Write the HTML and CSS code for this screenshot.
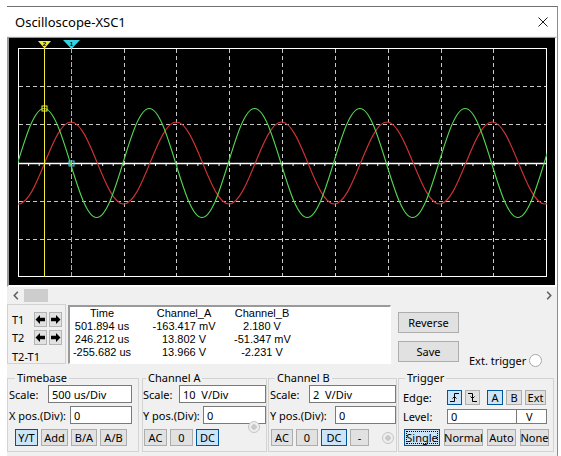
FILE: index.html
```html
<!DOCTYPE html>
<html lang="en">
<head>
<meta charset="utf-8">
<title>Oscilloscope-XSC1</title>
<link rel="stylesheet" href="styles.css">
</head>
<body>
<div class="window">
  <div class="titlebar">
    <span class="title">Oscilloscope-XSC1</span>
    <svg class="close" width="10" height="10" viewBox="0 0 10 10"><path d="M0.5 0.5L9.5 9.5M9.5 0.5L0.5 9.5" stroke="#1a1a1a" stroke-width="1"/></svg>
  </div>
  <div class="client">
    <div class="scope">
      <svg class="screen" width="546" height="247" viewBox="9 38 546 247">
        <defs><clipPath id="plot"><rect x="18" y="48" width="529" height="229"/></clipPath></defs>
        <path fill="none" stroke="#c8c8c8" stroke-width="1" stroke-dasharray="4 3" d="M71.5 49V277M124.5 49V277M176.5 49V277M229.5 49V277M282.5 49V277M335.5 49V277M388.5 49V277M441.5 49V277M493.5 49V277M19 86.5H547M19 124.5H547M19 201.5H547M19 239.5H547"/>
        <rect x="18.5" y="48.5" width="528" height="228" fill="none" stroke="#ffffff"/>
        <path d="M18 163.5H547" stroke="#ffffff" stroke-width="1.4"/>
        <path d="M28.1 165H540" stroke="#ffffff" stroke-width="2" stroke-dasharray="1 9.58"/>
        <g clip-path="url(#plot)" fill="none" stroke-width="1.1">
          <path stroke="#d03434" d="M-34.3 122c9.527 0 17.74 20 26.325 41c8.585 21 16.798 41 26.325 41c9.527 0 17.74 -20 26.325 -41c8.585 -21 16.798 -41 26.325 -41c9.527 0 17.74 20 26.325 41c8.585 21 16.798 41 26.325 41c9.527 0 17.74 -20 26.325 -41c8.585 -21 16.798 -41 26.325 -41c9.527 0 17.74 20 26.325 41c8.585 21 16.798 41 26.325 41c9.527 0 17.74 -20 26.325 -41c8.585 -21 16.798 -41 26.325 -41c9.527 0 17.74 20 26.325 41c8.585 21 16.798 41 26.325 41c9.527 0 17.74 -20 26.325 -41c8.585 -21 16.798 -41 26.325 -41c9.527 0 17.74 20 26.325 41c8.585 21 16.798 41 26.325 41c9.527 0 17.74 -20 26.325 -41c8.585 -21 16.798 -41 26.325 -41c9.527 0 17.74 20 26.325 41c8.585 21 16.798 41 26.325 41c9.527 0 17.74 -20 26.325 -41c8.585 -21 16.798 -41 26.325 -41"/>
          <path stroke="#52d852" d="M-61.3 108.5c9.527 0 17.74 26.58 26.325 54.5c8.585 27.92 16.798 54.5 26.325 54.5c9.527 0 17.74 -26.58 26.325 -54.5c8.585 -27.92 16.798 -54.5 26.325 -54.5c9.527 0 17.74 26.58 26.325 54.5c8.585 27.92 16.798 54.5 26.325 54.5c9.527 0 17.74 -26.58 26.325 -54.5c8.585 -27.92 16.798 -54.5 26.325 -54.5c9.527 0 17.74 26.58 26.325 54.5c8.585 27.92 16.798 54.5 26.325 54.5c9.527 0 17.74 -26.58 26.325 -54.5c8.585 -27.92 16.798 -54.5 26.325 -54.5c9.527 0 17.74 26.58 26.325 54.5c8.585 27.92 16.798 54.5 26.325 54.5c9.527 0 17.74 -26.58 26.325 -54.5c8.585 -27.92 16.798 -54.5 26.325 -54.5c9.527 0 17.74 26.58 26.325 54.5c8.585 27.92 16.798 54.5 26.325 54.5c9.527 0 17.74 -26.58 26.325 -54.5c8.585 -27.92 16.798 -54.5 26.325 -54.5c9.527 0 17.74 26.58 26.325 54.5c8.585 27.92 16.798 54.5 26.325 54.5c9.527 0 17.74 -26.58 26.325 -54.5c8.585 -27.92 16.798 -54.5 26.325 -54.5"/>
        </g>
        <line x1="44.5" y1="41" x2="44.5" y2="277" stroke="#f3ee3a" stroke-width="1"/>
        <line x1="71.5" y1="48" x2="71.5" y2="277" stroke="#45d6e2" stroke-width="1" stroke-dasharray="4 3"/>
        <rect x="42" y="106" width="5" height="5" fill="none" stroke="#f3ee3a"/>
        <rect x="69" y="161" width="5" height="5" fill="none" stroke="#45d6e2"/>
        <polygon points="38,41 51,41 44.5,48.5" fill="#f3ee3a"/>
        <text class="mk" x="44.5" y="46">2</text>
        <polygon points="63,40 80,40 71.5,49" fill="#30d4e4"/>
        <text class="mk" x="71.5" y="46">1</text>
      </svg>
    </div>
    <div class="hscroll">
      <div class="sb-btn"><svg width="6" height="9" viewBox="0 0 6 9"><path d="M4.8 0.8L1.3 4.5L4.8 8.2" fill="none" stroke="#606060" stroke-width="1.6"/></svg></div>
      <div class="sb-thumb"></div>
      <div class="sb-btn sb-right"><svg width="6" height="9" viewBox="0 0 6 9"><path d="M1.2 0.8L4.7 4.5L1.2 8.2" fill="none" stroke="#606060" stroke-width="1.6"/></svg></div>
    </div>
    <div class="midrow">
      <div class="cursors">
        <div class="crow">
          <span class="clabel">T1</span>
          <button class="abtn"><svg width="11" height="13" viewBox="0 0 11 13"><polygon points="0.5,6.5 5,2 5,4.8 10,4.8 10,8.2 5,8.2 5,11" fill="#000"/></svg></button>
          <button class="abtn"><svg width="11" height="13" viewBox="0 0 11 13"><polygon points="10.5,6.5 6,2 6,4.8 1,4.8 1,8.2 6,8.2 6,11" fill="#000"/></svg></button>
        </div>
        <div class="crow">
          <span class="clabel">T2</span>
          <button class="abtn"><svg width="11" height="13" viewBox="0 0 11 13"><polygon points="0.5,6.5 5,2 5,4.8 10,4.8 10,8.2 5,8.2 5,11" fill="#000"/></svg></button>
          <button class="abtn"><svg width="11" height="13" viewBox="0 0 11 13"><polygon points="10.5,6.5 6,2 6,4.8 1,4.8 1,8.2 6,8.2 6,11" fill="#000"/></svg></button>
        </div>
        <div class="crow crow-diff"><span class="clabel-diff">T2-T1</span></div>
      </div>
      <div class="readout">
        <span>Time</span><span>Channel_A</span><span>Channel_B</span>
        <span>501.894 us</span><span>-163.417 mV</span><span>2.180 V</span>
        <span>246.212 us</span><span>13.802 V</span><span>-51.347 mV</span>
        <span>-255.682 us</span><span>13.966 V</span><span>-2.231 V</span>
      </div>
      <div class="actions">
        <button class="btn btn-wide">Reverse</button>
        <button class="btn btn-wide">Save</button>
      </div>
      <div class="ext">Ext. trigger<span class="radio"></span></div>
    </div>
    <div class="controls">
      <fieldset class="grp grp-time">
        <legend class="lg-time">Timebase</legend>
        <div class="row"><span>Scale:</span><input class="field w84" type="text" value="500 us/Div" readonly></div>
        <div class="row"><span>X pos.(Div):</span><input class="field w62" type="text" value="0" readonly></div>
        <div class="btnrow pad-time">
          <button class="btn on w23">Y/T</button>
          <button class="btn w27">Add</button>
          <button class="btn w26">B/A</button>
          <button class="btn w27">A/B</button>
        </div>
      </fieldset>
      <fieldset class="grp grp-a">
        <legend class="lg-a">Channel A</legend>
        <div class="row"><span>Scale:</span><input class="field w87" type="text" value="10  V/Div" readonly></div>
        <div class="row"><span>Y pos.(Div):</span><input class="field w63" type="text" value="0" readonly></div>
        <div class="btnrow pad-a">
          <button class="btn w23">AC</button>
          <button class="btn w23">0</button>
          <button class="btn on w23">DC</button>
          <span class="radio radio-off radio-a"></span>
        </div>
      </fieldset>
      <fieldset class="grp grp-b">
        <legend class="lg-b">Channel B</legend>
        <div class="row"><span>Scale:</span><input class="field w87" type="text" value="2  V/Div" readonly></div>
        <div class="row"><span>Y pos.(Div):</span><input class="field w61" type="text" value="0" readonly></div>
        <div class="btnrow pad-b">
          <button class="btn w22">AC</button>
          <button class="btn w22">0</button>
          <button class="btn on w26">DC</button>
          <button class="btn w19">-</button>
          <span class="radio radio-off radio-b"></span>
        </div>
      </fieldset>
      <fieldset class="grp grp-trig">
        <legend class="lg-trig">Trigger</legend>
        <div class="trow">
          <span class="tlabel">Edge:</span>
          <button class="btn on ebtn"><svg width="13" height="13" viewBox="0 0 13 13"><path d="M2 10.5H6.5V2.5H11M4.5 7.5L6.5 5.5L8.5 7.5" fill="none" stroke="#000" stroke-width="1"/></svg></button>
          <button class="btn ebtn"><svg width="13" height="13" viewBox="0 0 13 13"><path d="M2 2.5H6.5V10.5H11M4.5 5.5L6.5 7.5L8.5 5.5" fill="none" stroke="#000" stroke-width="1"/></svg></button>
          <button class="btn on w16 src-first">A</button>
          <button class="btn w16">B</button>
          <button class="btn w21">Ext</button>
        </div>
        <div class="trow trow-level">
          <span class="tlabel">Level:</span>
          <input class="field lvl" type="text" value="0" readonly>
          <span class="unit">V</span>
        </div>
        <div class="btnrow pad-trig">
          <button class="btn on focus w36">Single</button>
          <button class="btn w39">Normal</button>
          <button class="btn w29">Auto</button>
          <button class="btn w29">None</button>
        </div>
      </fieldset>
    </div>
  </div>
</div>
</body>
</html>
```

FILE: styles.css
```css
* { box-sizing: border-box; }
html, body { margin: 0; background: #ffffff; }
body {
  font-family: "Noto Sans", "Liberation Sans", sans-serif;
  font-size: 11px;
  line-height: 13px;
  color: #000;
}
.window {
  margin: 6px 0 0 7px;
  width: 551px;
  height: 450px;
  border-top: 1px solid #707070;
  border-right: 1px solid #8c8c8c;
  background: #f0f0f0;
  overflow: hidden;
}
.titlebar {
  height: 29px;
  background: #ffffff;
  display: flex;
  align-items: center;
  justify-content: space-between;
  padding: 0 9px 0 8px;
}
.title { font-size: 13px; line-height: 16px; }
.close { display: block; }
.client { padding-top: 1px; }

.scope {
  width: 550px;
  height: 250px;
  border-style: solid;
  border-width: 1px 2px 2px 2px;
  border-color: #9a9a9a #ffffff #ffffff #9a9a9a;
  background: #000;
}
.screen { display: block; }
.mk {
  font-family: "Liberation Sans", sans-serif;
  font-size: 6px;
  font-weight: bold;
  text-anchor: middle;
  fill: #000;
}

.hscroll { height: 17px; display: flex; align-items: center; }
.sb-btn { width: 17px; height: 17px; display: flex; align-items: center; justify-content: center; }
.sb-btn svg { display: block; }
.sb-thumb { width: 24px; height: 13px; background: #cdcdcd; }
.sb-right { margin-left: auto; }

.midrow { display: flex; align-items: flex-start; height: 67px; }
.cursors {
  width: 59px;
  height: 60px;
  border: 1px solid #d2d2d2;
  padding: 7px 0 0 4px;
}
.crow { display: flex; align-items: center; height: 15px; }
.crow + .crow { margin-top: 3px; }
.crow.crow-diff { margin-top: 5px; height: 13px; }
.clabel { width: 22px; }
.clabel-diff { white-space: nowrap; }
.abtn {
  width: 13px;
  height: 15px;
  margin: 0 2px 0 0;
  padding: 0;
  border: 1px solid #b4b4b4;
  background: #e1e1e1;
  display: flex;
  align-items: center;
  justify-content: center;
}
.abtn svg { display: block; }

.readout {
  margin: 1px 0 0 2px;
  width: 323px;
  height: 59px;
  background: #fff;
  border-style: solid;
  border-width: 2px 1px 1px 2px;
  border-color: #9a9a9a #ffffff #ffffff #9a9a9a;
  display: grid;
  grid-template-columns: 64px 100px 56px;
  grid-auto-rows: 13px;
  align-content: start;
  text-align: center;
  white-space: nowrap;
  font-family: "Liberation Sans", "Noto Sans", sans-serif;
  font-size: 11px;
  line-height: 13px;
}

.actions {
  margin-left: 7px;
  width: 61px;
  padding-top: 8px;
  display: flex;
  flex-direction: column;
  gap: 8px;
}
.btn {
  display: flex;
  align-items: center;
  justify-content: center;
  font: inherit;
  margin: 0;
  padding: 0;
  background: #e1e1e1;
  border: 1px solid #adadad;
  color: #000;
  white-space: nowrap;
}
.btn.on { background: #cce4f7; border-color: #005499; }
.btn.focus { outline: 1px dotted #000; outline-offset: -3px; }
.btn-wide { width: 61px; height: 21px; }

.ext {
  margin: 49px 0 0 10px;
  display: flex;
  align-items: center;
  gap: 3px;
  height: 15px;
  white-space: nowrap;
}
.radio {
  display: inline-block;
  flex: none;
  width: 13px;
  height: 13px;
  border-radius: 50%;
  border: 1px solid #a8a8a8;
  background: #fff;
}
.radio-off {
  width: 12px;
  height: 12px;
  border-color: #c4c4c4;
  background: radial-gradient(circle, #c9c9c9 0 2.5px, #eeeeee 3px);
}
.radio-a { align-self: flex-start; margin: -8px 0 0 26px; }
.radio-b { margin-left: 10px; }

.controls { display: flex; align-items: flex-start; }
.grp {
  margin: 0;
  padding: 0 0 5px 0;
  border: 1px solid #d3d3d3;
  min-width: 0;
}
legend { padding: 0 2px; line-height: 14px; }
.grp-time { width: 132px; padding-right: 6px; }
.grp-a { width: 125px; margin-left: 3px; }
.grp-b { width: 129px; margin-left: 1px; }
.grp-trig { width: 156px; margin-left: 1px; }
.lg-time { margin-left: 7px; }
.lg-a { margin-left: 3px; }
.lg-b { margin-left: 6px; }
.lg-trig { margin-left: 6px; }

.row { display: flex; align-items: center; height: 18px; white-space: nowrap; }
.row + .row { margin-top: 3px; }
.grp-time .row { padding-left: 1px; }
.grp-b .row { padding-left: 1px; }
.field {
  height: 18px;
  margin: 0 0 0 auto;
  border: 1px solid #7a7a7a;
  background: #fff;
  font: inherit;
  color: #000;
  padding: 0 0 0 3px;
  outline: none;
}
.w84 { width: 84px; }
.w62 { width: 62px; }
.w87 { width: 87px; }
.w63 { width: 63px; }
.w61 { width: 61px; }

.btnrow { display: flex; align-items: center; gap: 3px; height: 17px; margin-top: 5px; }
.btnrow .btn { height: 17px; }
.pad-time { padding-left: 7px; }
.pad-a { padding-left: 1px; }
.pad-b { padding-left: 2px; }
.pad-trig { padding-left: 5px; gap: 4px; }
.w16 { width: 16px; }
.w19 { width: 19px; }
.w21 { width: 21px; }
.w22 { width: 22px; }
.w23 { width: 23px; }
.w26 { width: 26px; }
.w27 { width: 27px; }
.w29 { width: 29px; }
.w36 { width: 36px; }
.w39 { width: 39px; }

.grp-trig .trow { padding-left: 4px; }
.trow { display: flex; align-items: center; height: 15px; margin-top: 5px; gap: 3px; }
.trow.trow-level { margin-top: 4px; gap: 0; }
.tlabel { width: 41px; }
.trow-level .tlabel { width: 44px; }
.ebtn { width: 15px; height: 15px; }
.trow .btn { height: 15px; }
.src-first { margin-left: 4px; }
.field.lvl { width: 70px; height: 15px; margin: 0; }
.unit {
  width: 30px;
  height: 15px;
  border: 1px solid #7a7a7a;
  border-left: none;
  background: #fff;
  padding-left: 9px;
  line-height: 13px;
}
```
